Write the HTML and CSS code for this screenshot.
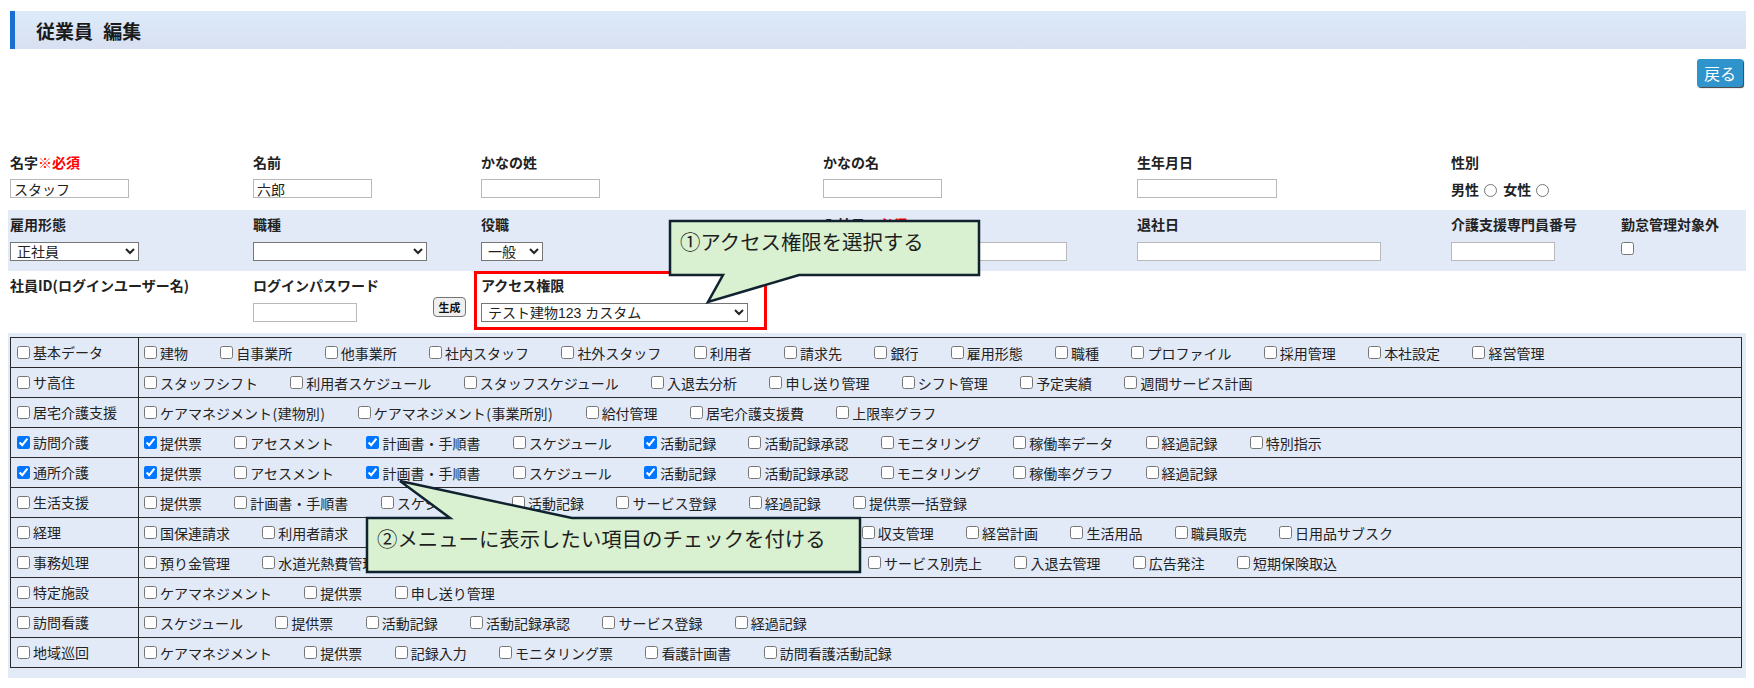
FILE: index.html
```html
<!DOCTYPE html>
<html lang="ja">
<head>
<meta charset="utf-8">
<title>従業員 編集</title>
<link rel="stylesheet" href="styles.css">
</head>
<body>
<h1 class="page-title">従業員 編集</h1>
<div class="toolbar"><button class="btn-back" type="button">戻る</button></div>

<div class="form-row row1">
  <div class="cell"><div class="lbl">名字<span class="req">※必須</span></div><input class="txt w119" type="text" value="スタッフ"></div>
  <div class="cell"><div class="lbl">名前</div><input class="txt w119" type="text" value="六郎"></div>
  <div class="cell"><div class="lbl">かなの姓</div><input class="txt w119" type="text"></div>
  <div class="cell"><div class="lbl">かなの名</div><input class="txt w119" type="text"></div>
  <div class="cell"><div class="lbl">生年月日</div><input class="txt w140" type="text"></div>
  <div class="cell"><div class="lbl">性別</div><div class="lbl">男性<input type="radio" name="sex"> 女性<input type="radio" name="sex"></div></div>
  <div class="cell"></div>
</div>

<div class="form-row row2 band">
  <div class="cell"><div class="lbl">雇用形態</div><select class="sel w129"><option>正社員</option></select></div>
  <div class="cell"><div class="lbl">職種</div><select class="sel w174"><option></option></select></div>
  <div class="cell"><div class="lbl">役職</div><select class="sel w62"><option>一般</option></select></div>
  <div class="cell"><div class="lbl">入社日<span class="req">※必須</span></div><input class="txt w244" type="text"></div>
  <div class="cell"><div class="lbl">退社日</div><input class="txt w244" type="text"></div>
  <div class="cell"><div class="lbl">介護支援専門員番号</div><input class="txt w104" type="text"></div>
  <div class="cell"><div class="lbl">勤怠管理対象外</div><input class="chk-only" type="checkbox"></div>
</div>

<div class="form-row row3">
  <div class="cell"><div class="lbl">社員ID(ログインユーザー名)</div></div>
  <div class="cell pw">
    <div><div class="lbl">ログインパスワード</div><input class="txt w104" type="password"></div>
    <button class="btn-gen" type="button">生成</button>
  </div>
  <div class="cell access"><div class="lbl">アクセス権限</div><select class="sel w267"><option>テスト建物123 カスタム</option></select></div>
  <div class="cell"></div>
  <div class="cell"></div>
  <div class="cell"></div>
  <div class="cell"></div>
</div>

<div class="perm-wrap">
<table class="perm">
<colgroup><col class="c1"><col></colgroup>
<tr><td class="cat"><label class="it"><input type="checkbox">基本データ</label></td><td><div class="list">
<label class="it"><input type="checkbox">建物</label><label class="it"><input type="checkbox">自事業所</label><label class="it"><input type="checkbox">他事業所</label><label class="it"><input type="checkbox">社内スタッフ</label><label class="it"><input type="checkbox">社外スタッフ</label><label class="it"><input type="checkbox">利用者</label><label class="it"><input type="checkbox">請求先</label><label class="it"><input type="checkbox">銀行</label><label class="it"><input type="checkbox">雇用形態</label><label class="it"><input type="checkbox">職種</label><label class="it"><input type="checkbox">プロファイル</label><label class="it"><input type="checkbox">採用管理</label><label class="it"><input type="checkbox">本社設定</label><label class="it"><input type="checkbox">経営管理</label>
</div></td></tr>
<tr><td class="cat"><label class="it"><input type="checkbox">サ高住</label></td><td><div class="list">
<label class="it"><input type="checkbox">スタッフシフト</label><label class="it"><input type="checkbox">利用者スケジュール</label><label class="it"><input type="checkbox">スタッフスケジュール</label><label class="it"><input type="checkbox">入退去分析</label><label class="it"><input type="checkbox">申し送り管理</label><label class="it"><input type="checkbox">シフト管理</label><label class="it"><input type="checkbox">予定実績</label><label class="it"><input type="checkbox">週間サービス計画</label>
</div></td></tr>
<tr><td class="cat"><label class="it"><input type="checkbox">居宅介護支援</label></td><td><div class="list">
<label class="it"><input type="checkbox">ケアマネジメント<span class="par">(</span>建物別<span class="par">)</span></label><label class="it"><input type="checkbox">ケアマネジメント<span class="par">(</span>事業所別<span class="par">)</span></label><label class="it"><input type="checkbox">給付管理</label><label class="it"><input type="checkbox">居宅介護支援費</label><label class="it"><input type="checkbox">上限率グラフ</label>
</div></td></tr>
<tr><td class="cat"><label class="it"><input type="checkbox" checked>訪問介護</label></td><td><div class="list">
<label class="it"><input type="checkbox" checked>提供票</label><label class="it"><input type="checkbox">アセスメント</label><label class="it"><input type="checkbox" checked>計画書・手順書</label><label class="it"><input type="checkbox">スケジュール</label><label class="it"><input type="checkbox" checked>活動記録</label><label class="it"><input type="checkbox">活動記録承認</label><label class="it"><input type="checkbox">モニタリング</label><label class="it"><input type="checkbox">稼働率データ</label><label class="it"><input type="checkbox">経過記録</label><label class="it"><input type="checkbox">特別指示</label>
</div></td></tr>
<tr><td class="cat"><label class="it"><input type="checkbox" checked>通所介護</label></td><td><div class="list">
<label class="it"><input type="checkbox" checked>提供票</label><label class="it"><input type="checkbox">アセスメント</label><label class="it"><input type="checkbox" checked>計画書・手順書</label><label class="it"><input type="checkbox">スケジュール</label><label class="it"><input type="checkbox" checked>活動記録</label><label class="it"><input type="checkbox">活動記録承認</label><label class="it"><input type="checkbox">モニタリング</label><label class="it"><input type="checkbox">稼働率グラフ</label><label class="it"><input type="checkbox">経過記録</label>
</div></td></tr>
<tr><td class="cat"><label class="it"><input type="checkbox">生活支援</label></td><td><div class="list">
<label class="it"><input type="checkbox">提供票</label><label class="it"><input type="checkbox">計画書・手順書</label><label class="it"><input type="checkbox">スケジュール</label><label class="it"><input type="checkbox">活動記録</label><label class="it"><input type="checkbox">サービス登録</label><label class="it"><input type="checkbox">経過記録</label><label class="it"><input type="checkbox">提供票一括登録</label>
</div></td></tr>
<tr><td class="cat"><label class="it"><input type="checkbox">経理</label></td><td><div class="list">
<label class="it"><input type="checkbox">国保連請求</label><label class="it"><input type="checkbox">利用者請求</label><label class="it"><input type="checkbox">入金・未収金管理</label><label class="it"><input type="checkbox">売上・仕入管理表</label><label class="it"><input type="checkbox">月次決算レポート</label><label class="it"><input type="checkbox">収支管理</label><label class="it"><input type="checkbox">経営計画</label><label class="it"><input type="checkbox">生活用品</label><label class="it"><input type="checkbox">職員販売</label><label class="it"><input type="checkbox">日用品サブスク</label>
</div></td></tr>
<tr><td class="cat"><label class="it"><input type="checkbox">事務処理</label></td><td><div class="list">
<label class="it"><input type="checkbox">預り金管理</label><label class="it"><input type="checkbox">水道光熱費管理</label><label class="it"><input type="checkbox">家賃管理</label><label class="it"><input type="checkbox">敷金保証金管理</label><label class="it"><input type="checkbox">修繕管理</label><label class="it"><input type="checkbox">備品管理</label><label class="it"><input type="checkbox">サービス別売上</label><label class="it"><input type="checkbox">入退去管理</label><label class="it"><input type="checkbox">広告発注</label><label class="it"><input type="checkbox">短期保険取込</label>
</div></td></tr>
<tr><td class="cat"><label class="it"><input type="checkbox">特定施設</label></td><td><div class="list">
<label class="it"><input type="checkbox">ケアマネジメント</label><label class="it"><input type="checkbox">提供票</label><label class="it"><input type="checkbox">申し送り管理</label>
</div></td></tr>
<tr><td class="cat"><label class="it"><input type="checkbox">訪問看護</label></td><td><div class="list">
<label class="it"><input type="checkbox">スケジュール</label><label class="it"><input type="checkbox">提供票</label><label class="it"><input type="checkbox">活動記録</label><label class="it"><input type="checkbox">活動記録承認</label><label class="it"><input type="checkbox">サービス登録</label><label class="it"><input type="checkbox">経過記録</label>
</div></td></tr>
<tr><td class="cat"><label class="it"><input type="checkbox">地域巡回</label></td><td><div class="list">
<label class="it"><input type="checkbox">ケアマネジメント</label><label class="it"><input type="checkbox">提供票</label><label class="it"><input type="checkbox">記録入力</label><label class="it"><input type="checkbox">モニタリング票</label><label class="it"><input type="checkbox">看護計画書</label><label class="it"><input type="checkbox">訪問看護活動記録</label>
</div></td></tr>
</table>
</div>

<div class="callout callout-1">
  <svg class="callout-shape" width="314" height="86" viewBox="0 0 314 86"><path d="M2 2 H311 V56 H131 L40 83 L55 56 H2 Z"/></svg>
  <div class="callout-text">①アクセス権限を選択する</div>
</div>
<div class="callout callout-2">
  <svg class="callout-shape" width="498" height="96" viewBox="0 0 498 96"><path d="M2 39 H85 L35 2 L207 39 H495 V93 H2 Z"/></svg>
  <div class="callout-text">②メニューに表示したい項目のチェックを付ける</div>
</div>
</body>
</html>
```

FILE: styles.css
```css
html, body { margin: 0; padding: 0; }
body {
  margin: 8px;
  font-family: "Noto Sans CJK JP", "Noto Sans", sans-serif;
  font-size: 14px;
  color: #222;
  background: #fff;
}

.page-title {
  margin: 3px -2px 0 2px;
  height: 38px;
  box-sizing: border-box;
  border-left: 5px solid #1b6fd2;
  background: linear-gradient(#dcebfa, #d8e0f1);
  display: flex;
  align-items: center;
  padding-left: 21px;
  font-size: 19px;
  font-weight: bold;
  word-spacing: 6px;
  color: #1a1a1a;
}

.toolbar {
  display: flex;
  justify-content: flex-end;
  margin-top: 10px;
  padding-right: 3px;
}
.btn-back {
  width: 46px;
  height: 28px;
  border: none;
  border-radius: 3px;
  background: #2f93cc;
  color: #fff;
  font-family: inherit;
  font-size: 16px;
  line-height: 28px;
  padding: 0;
  box-shadow: 1px 1px 1px #3a3a3a;
}

.form-row {
  display: grid;
  grid-template-columns: 243px 228px 342px 314px 314px 170px 1fr;
  padding-left: 2px;
  margin-right: -2px;
  box-sizing: border-box;
}
.row1 { margin-top: 61px; height: 62px; }
.row2 { height: 61px; }
.row3 { height: 60px; }
.band { background: #e2eaf7; }

.cell { padding-top: 4px; }
.lbl {
  font-weight: bold;
  line-height: 20px;
  white-space: nowrap;
}
.row1 .cell > .lbl:first-child { margin-bottom: 7px; }
.row2 .cell > .lbl:first-child,
.row3 .cell .lbl { margin-bottom: 8px; }
.row1 .cell > .lbl + .lbl { margin-bottom: 0; }
.req { color: #f00; }

.txt {
  display: block;
  height: 19px;
  box-sizing: border-box;
  border: 1px solid #b9b9b9;
  padding: 0 3px;
  font-family: "Liberation Sans", "Noto Sans CJK JP", sans-serif;
  font-size: 14px;
  line-height: 17px;
  background: #fff;
  color: #222;
}
.sel {
  display: block;
  height: 19px;
  box-sizing: border-box;
  border: 1px solid #767676;
  border-radius: 0;
  padding: 0 2px;
  font-family: "Liberation Sans", "Noto Sans CJK JP", sans-serif;
  font-size: 14px;
  line-height: 17px;
  background: #fff;
  color: #222;
}
.w104 { width: 104px; }
.w119 { width: 119px; }
.w140 { width: 140px; }
.w244 { width: 244px; }
.w129 { width: 129px; }
.w174 { width: 174px; }
.w62 { width: 62px; }
.w267 { width: 267px; }

.chk-only { margin: 0; display: block; }
.lbl input[type="radio"] { vertical-align: -2px; }

.pw {
  display: flex;
  align-items: flex-start;
  justify-content: space-between;
  padding-right: 15px;
}
.btn-gen {
  margin-top: 22px;
  width: 33px;
  height: 20px;
  padding: 0;
  border: 1px solid #767676;
  border-radius: 4px;
  background: #efefef;
  font-family: inherit;
  font-size: 11px;
  font-weight: bold;
  color: #111;
}

.access { position: relative; }
.access::after {
  content: "";
  position: absolute;
  left: -7px;
  top: 0;
  width: 293px;
  height: 59px;
  box-sizing: border-box;
  border: 3px solid #f00;
  pointer-events: none;
}

.perm-wrap {
  margin: 2px -3px 0 0;
  padding: 4px 7px 10px 2px;
  background: #e2eaf7;
}
.perm {
  width: 100%;
  border-collapse: collapse;
  table-layout: fixed;
  background: #e2eaf7;
}
.perm col.c1 { width: 128px; }
.perm td {
  border: 1px solid #2a2a2a;
  height: 29px;
  padding: 0 2px;
  vertical-align: middle;
  white-space: nowrap;
  overflow: hidden;
}
.perm td + td { padding-left: 1px; }
.list { display: flex; align-items: center; }
.it {
  display: inline-flex;
  align-items: center;
  margin-right: 28.35px;
  line-height: 20px;
  color: #222;
}
.it input { margin: 0 3px 0 4px; width: 13px; height: 13px; }
.par { padding: 0 0.5px; }

.callout {
  position: absolute;
}
.callout-1 { left: 668px; top: 219px; width: 314px; height: 86px; }
.callout-2 { left: 365px; top: 479px; width: 498px; height: 96px; }
.callout-shape {
  position: absolute;
  left: 0;
  top: 0;
  display: block;
}
.callout-shape path {
  fill: #d9f1d0;
  stroke: #10222f;
  stroke-width: 2.5;
  stroke-linejoin: miter;
}
.callout-text {
  position: absolute;
  font-size: 20.4px;
  line-height: 28px;
  color: #1e1e1e;
  white-space: nowrap;
}
.callout-1 .callout-text { left: 12px; top: 8px; }
.callout-2 .callout-text { left: 12px; top: 45px; }
```
